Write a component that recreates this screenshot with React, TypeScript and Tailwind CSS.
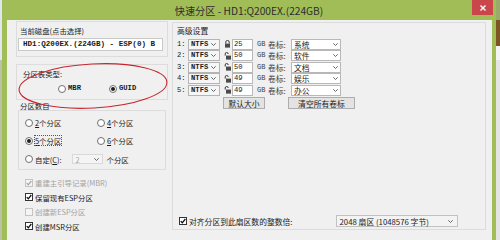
import React from 'react';

const cjk = "font-['Noto_Sans_CJK_SC','Noto_Sans',sans-serif]";
const mono = "font-['Liberation_Mono','Noto_Sans_CJK_SC',monospace]";

function Radio({ checked, label, labelClass }: { checked?: boolean; label: React.ReactNode; labelClass?: string }) {
  return (
    <div className="flex items-center h-[9px] gap-[2px]">
      <span className="w-[8px] h-[8px] rounded-full border border-[#707070] bg-white flex items-center justify-center shrink-0">
        {checked && <span className="w-[4px] h-[4px] rounded-full bg-[#1e1e1e]" />}
      </span>
      <span className={labelClass}>{label}</span>
    </div>
  );
}

function Check({ checked, disabled, label }: { checked?: boolean; disabled?: boolean; label: React.ReactNode }) {
  return (
    <div className={`flex items-center h-[9px] gap-[2px] ${disabled ? 'text-[#a3a3a3]' : 'text-[#1a1a1a]'}`}>
      <span
        className={`w-[8px] h-[8px] border flex items-center justify-center shrink-0 ${
          disabled ? 'border-[#c4c4c4] bg-[#f4f4f4]' : 'border-[#333] bg-white'
        }`}
      >
        {checked && (
          <svg width="6" height="6" viewBox="0 0 6 6">
            <path d="M0.7 3.1 L2.3 4.8 L5.3 1" fill="none" stroke={disabled ? '#a8a8a8' : '#111'} strokeWidth="1.3" />
          </svg>
        )}
      </span>
      <span>{label}</span>
    </div>
  );
}

function Arrow() {
  return (
    <svg width="5" height="3" viewBox="0 0 5 3" className="shrink-0">
      <path d="M0.3 0.3 L2.5 2.5 L4.7 0.3" fill="none" stroke="#555" strokeWidth="0.9" />
    </svg>
  );
}

function Lock({ open }: { open?: boolean }) {
  return (
    <svg width="7" height="8" viewBox="0 0 7 8" className="shrink-0 block">
      {open ? (
        <path d="M1.2 3.6 V2 a1.5 1.5 0 0 1 3 0" fill="none" stroke="#3a3a3a" strokeWidth="1" />
      ) : (
        <path d="M1.8 3.6 V2.1 a1.7 1.7 0 0 1 3.4 0 V3.6" fill="none" stroke="#3a3a3a" strokeWidth="1" />
      )}
      <rect x={open ? 2 : 1} y="3.6" width="5" height="4" fill="#4a4a4a" />
    </svg>
  );
}

const rows = [
  { n: '1:', size: '25', label: '系统', open: false },
  { n: '2:', size: '50', label: '软件', open: true },
  { n: '3:', size: '50', label: '文档', open: true },
  { n: '4:', size: '49', label: '娱乐', open: true },
  { n: '5:', size: '49', label: '办公', open: true },
];

export default function App() {
  return (
    <div className={`w-[500px] h-[240px] overflow-hidden flex bg-[#e9e9e9] text-[#1a1a1a] ${cjk}`}>
      {/* desktop sliver */}
      <div className="w-[2px] flex flex-col">
        <div className="h-[60px] bg-[#dfe6ee]" />
        <div className="flex-1 bg-[#b9c4a4]" />
      </div>

      {/* window */}
      <div className="w-[494px] flex flex-col bg-[#a1bd58]">
        <div className="h-[20px] relative flex items-center justify-center">
          <span className="text-[10.2px] text-[#2d2d2d] leading-none mt-[3px]">快速分区 - HD1:Q200EX.(224GB)</span>
          <div className="absolute right-[3px] top-0 w-[21px] h-[15px] bg-[#c9464a] flex items-center justify-center">
            <svg width="6" height="6" viewBox="0 0 6 6">
              <path d="M0.5 0.5 L5.5 5.5 M5.5 0.5 L0.5 5.5" stroke="#fff" strokeWidth="1.4" />
            </svg>
          </div>
        </div>

        <div className="flex-1 ml-[5px] mr-[4px] bg-[#f0f0f0] flex pl-[9px] pr-[6px] pt-[1px] relative">
          {/* left column */}
          <div className="w-[152px] flex flex-col text-[7.4px] leading-[9px]">
            <div className="h-[36px] border border-[#dcdcdc] pt-[4px]">
              <div className="pl-[3px]">当前磁盘(点击选择)</div>
              <div className={`mt-[3px] ml-[1px] w-[145px] h-[13px] bg-white border border-[#c9c9c9] flex items-center pl-[4px] overflow-hidden whitespace-nowrap text-[7.6px] font-bold ${mono}`}>
                HD1:Q200EX.(224GB) - ESP(0) B
              </div>
            </div>

            <div className="mt-[7px] h-[36px] border border-[#dcdcdc] pt-[4px]">
              <div className="pl-[6px]">分区表类型:</div>
              <div className={`mt-[6px] pl-[41px] flex gap-[28px] ${mono} text-[7.2px] font-bold`}>
                <Radio label="MBR" />
                <Radio checked label="GUID" />
              </div>
            </div>

            <div className="mt-[1px] pl-[4px]">分区数目</div>
            <div className="ml-[2px] w-[148px] h-[60px] border border-[#dcdcdc] pt-[7px] pl-[6px] flex flex-col gap-[9px]">
              <div className="flex">
                <div className="w-[72px]"><Radio label={<><u>2</u>个分区</>} /></div>
                <Radio label={<><u>4</u>个分区</>} />
              </div>
              <div className="flex">
                <div className="w-[72px]">
                  <Radio checked label={<><u>5</u>个分区</>} labelClass="outline outline-1 outline-dotted outline-[#555]" />
                </div>
                <Radio label={<><u>6</u>个分区</>} />
              </div>
              <div className="flex items-center">
                <Radio label={<>自定(<u>C</u>):</>} />
                <div className="ml-[10px] w-[31px] h-[10px] border border-[#d9d9d9] bg-[#f4f4f4] text-[#a8a8a8] flex items-center justify-between px-[3px]">
                  <span>2</span>
                  <Arrow />
                </div>
                <span className="ml-[4px]">个分区</span>
              </div>
            </div>

            <div className="mt-[8px] pl-[9px] flex flex-col gap-[5.5px]">
              <Check checked disabled label="重建主引导记录(MBR)" />
              <Check checked label="保留现有ESP分区" />
              <Check disabled label="创建新ESP分区" />
              <Check checked label="创建MSR分区" />
            </div>
          </div>

          {/* right panel */}
          <div className="ml-[4px] w-[314px] h-[208px] mt-[1px] border border-[#dcdcdc] flex flex-col pl-[4px] pt-[3px] pb-[2px] text-[7.8px] leading-[9px]">
            <div>高级设置</div>
            <div className="mt-[3.5px] flex flex-col">
              {rows.map((r) => (
                <div key={r.n} className="h-[11.5px] flex items-center">
                  <span className={`w-[11px] ${mono} text-[7.2px]`}>{r.n}</span>
                  <div className={`w-[32px] h-[11px] border border-[#b4b4b4] bg-[#f6f6f6] flex items-center justify-between pl-[2px] pr-[3px] ${mono} text-[7.2px] font-bold`}>
                    <span>NTFS</span>
                    <Arrow />
                  </div>
                  <span className="ml-[4px]"><Lock open={r.open} /></span>
                  <div className={`ml-[1px] w-[21px] h-[11px] border border-[#b8b8b8] bg-white flex items-center pl-[1px] ${mono} text-[7.2px]`}>
                    {r.size}
                  </div>
                  <span className={`ml-[4px] w-[10px] ${mono} text-[7px] text-[#444]`}>GB</span>
                  <span className="ml-[1px] w-[23px] text-[#444]">卷标:</span>
                  <div className="w-[50px] h-[11px] border border-[#b8b8b8] bg-white flex items-center justify-between pl-[2px] pr-[2px]">
                    <span>{r.label}</span>
                    <Arrow />
                  </div>
                </div>
              ))}
            </div>
            <div className="mt-[1px] flex">
              <div className="ml-[46px] w-[42px] h-[12px] border border-[#adadad] bg-[#e3e3e3] flex items-center justify-center">默认大小</div>
              <div className="ml-[23px] w-[67px] h-[12px] border border-[#adadad] bg-[#e3e3e3] flex items-center justify-center">清空所有卷标</div>
            </div>
            <div className="flex-1" />
            <div className="flex items-center h-[12px]">
              <div className="ml-[2px]">
                <Check checked label="对齐分区到此扇区数的整数倍:" />
              </div>
              <div className="ml-[43px] w-[122px] h-[12px] border border-[#c2c2c2] bg-[#f3f3f3] flex items-center justify-between pl-[3px] pr-[4px]">
                <span>2048 扇区 (1048576 字节)</span>
                <Arrow />
              </div>
            </div>
          </div>

          {/* hand-drawn highlight */}
          <svg className="absolute left-[9px] top-[41px] pointer-events-none" width="154" height="50" viewBox="0 0 154 50">
            <ellipse cx="77" cy="25" rx="74" ry="22" fill="none" stroke="#c7262e" strokeWidth="1.1" transform="rotate(-3 77 25)" />
          </svg>
        </div>
      </div>

      {/* desktop sliver right */}
      <div className="w-[4px] flex flex-col">
        <div className="h-[20px] bg-[#9aaa6a]" />
        <div className="h-[26px] bg-[#7d5424]" />
        <div className="h-[14px] bg-[#f4f4f4]" />
        <div className="flex-1 bg-[#e4e4e4]" />
      </div>
    </div>
  );
}
